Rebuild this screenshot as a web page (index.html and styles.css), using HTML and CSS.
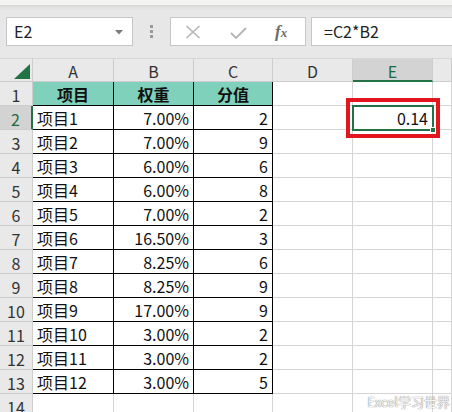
FILE: index.html
```html
<!DOCTYPE html>
<html>
<head>
<meta charset="utf-8">
<link rel="stylesheet" href="styles.css">
</head>
<body>
<div class="app">
  <div class="topstrip"></div>
  <div class="fbar">
    <div class="namebox">
      <span class="nb-text">E2</span>
      <svg class="nb-arrow" width="8" height="5" viewBox="0 0 8 5"><path d="M0 0 H8 L4 4.5 Z" fill="#7a7a7a"/></svg>
    </div>
    <div class="grip"><i></i><i></i><i></i></div>
    <div class="fxbox">
      <svg class="ic-x" width="16" height="14" viewBox="0 0 16 14"><path d="M1.5 1 L14.5 13 M14.5 1 L1.5 13" stroke="#b4b4b4" stroke-width="1.6" fill="none"/></svg>
      <svg class="ic-v" width="17" height="12" viewBox="0 0 17 12"><path d="M1 6 L6 11 L16 1" stroke="#b4b4b4" stroke-width="1.8" fill="none"/></svg>
      <span class="ic-fx">f<span class="x">x</span></span>
    </div>
    <div class="formula">=C2*B2</div>
  </div>
  <div class="grid">
    <div class="h corner"><svg class="tri" width="16" height="15" viewBox="0 0 16 15"><path d="M16 0 V15 H0 Z" fill="#217346"/></svg></div>
    <div class="h col">A</div><div class="h col">B</div><div class="h col">C</div><div class="h col">D</div><div class="h col sel">E</div><div class="h col"></div>

    <div class="h row">1</div><div class="c t th">项目</div><div class="c t th">权重</div><div class="c t th">分值</div><div class="c"></div><div class="c"></div><div class="c"></div>
    <div class="h row rsel">2</div><div class="c t">项目1</div><div class="c t r">7.00%</div><div class="c t r">2</div><div class="c"></div><div class="c r active">0.14<span class="act"><span class="handle"></span></span><span class="redbox"></span></div><div class="c"></div>
    <div class="h row">3</div><div class="c t">项目2</div><div class="c t r">7.00%</div><div class="c t r">9</div><div class="c"></div><div class="c"></div><div class="c"></div>
    <div class="h row">4</div><div class="c t">项目3</div><div class="c t r">6.00%</div><div class="c t r">6</div><div class="c"></div><div class="c"></div><div class="c"></div>
    <div class="h row">5</div><div class="c t">项目4</div><div class="c t r">6.00%</div><div class="c t r">8</div><div class="c"></div><div class="c"></div><div class="c"></div>
    <div class="h row">6</div><div class="c t">项目5</div><div class="c t r">7.00%</div><div class="c t r">2</div><div class="c"></div><div class="c"></div><div class="c"></div>
    <div class="h row">7</div><div class="c t">项目6</div><div class="c t r">16.50%</div><div class="c t r">3</div><div class="c"></div><div class="c"></div><div class="c"></div>
    <div class="h row">8</div><div class="c t">项目7</div><div class="c t r">8.25%</div><div class="c t r">6</div><div class="c"></div><div class="c"></div><div class="c"></div>
    <div class="h row">9</div><div class="c t">项目8</div><div class="c t r">8.25%</div><div class="c t r">9</div><div class="c"></div><div class="c"></div><div class="c"></div>
    <div class="h row">10</div><div class="c t">项目9</div><div class="c t r">17.00%</div><div class="c t r">9</div><div class="c"></div><div class="c"></div><div class="c"></div>
    <div class="h row">11</div><div class="c t">项目10</div><div class="c t r">3.00%</div><div class="c t r">2</div><div class="c"></div><div class="c"></div><div class="c"></div>
    <div class="h row">12</div><div class="c t">项目11</div><div class="c t r">3.00%</div><div class="c t r">2</div><div class="c"></div><div class="c"></div><div class="c"></div>
    <div class="h row">13</div><div class="c t">项目12</div><div class="c t r">3.00%</div><div class="c t r">5</div><div class="c"></div><div class="c"></div><div class="c"></div>
    <div class="h row">14</div><div class="c"></div><div class="c"></div><div class="c"></div><div class="c"></div><div class="c"></div><div class="c"></div>
  </div>
  <div class="watermark">Excel学习世界</div>
</div>
</body>
</html>
```

FILE: styles.css
```css
* { box-sizing: border-box; }
html, body { margin: 0; padding: 0; }
body {
  width: 452px;
  height: 412px;
  overflow: hidden;
  background: #fff;
  font-family: "Noto Sans CJK SC", "Noto Sans", sans-serif;
  color: #111;
}
.app { position: relative; width: 452px; height: 412px; overflow: hidden; }

.topstrip {
  height: 6px;
  background: #f3f3f2;
  border-bottom: 1px solid #d9d9d9;
}
.fbar {
  height: 52px;
  background: linear-gradient(#dedede, #e7e7e7 5px, #e8e8e8);
  display: flex;
  align-items: flex-start;
  padding-top: 11px;
}
.namebox {
  margin-left: 6px;
  width: 127px;
  height: 29px;
  background: #fff;
  border: 1px solid #c6c6c6;
  display: flex;
  align-items: center;
  justify-content: space-between;
  padding: 0 9px 0 7px;
}
.nb-text { font-size: 16px; color: #222; line-height: 27px; }
.nb-arrow { display: block; margin-top: 1px; }
.grip {
  width: 37px;
  height: 29px;
  display: flex;
  flex-direction: column;
  align-items: center;
  justify-content: center;
  gap: 2px;
}
.grip i { display: block; width: 3px; height: 3px; background: #9a9a9a; }
.fxbox {
  width: 136px;
  height: 29px;
  background: #fff;
  border: 1px solid #c6c6c6;
  display: flex;
  align-items: center;
  padding-left: 14px;
}
.ic-x { display: block; }
.ic-v { display: block; margin-left: 29px; margin-top: 3px; }
.ic-fx {
  margin-left: 28px;
  font-family: "Liberation Serif", serif;
  font-style: italic;
  font-weight: bold;
  font-size: 17px;
  color: #6b6b6b;
  line-height: 1;
}
.ic-fx .x { font-size: 13px; }
.formula {
  margin-left: 5px;
  flex: 1;
  height: 29px;
  background: #fff;
  border: 1px solid #c6c6c6;
  border-right: none;
  font-size: 16px;
  line-height: 27px;
  padding-left: 12px;
  color: #222;
}

.grid {
  display: grid;
  grid-template-columns: 33px 81px 80px 79px 80px 80px 19px;
  grid-auto-rows: 24px;
}
.h {
  background: #e9e9e9;
  border-right: 1px solid #cdcdcd;
  border-bottom: 1px solid #cdcdcd;
  font-size: 16px;
  color: #333;
  display: flex;
  align-items: center;
  justify-content: center;
  padding-top: 2px;
}
.corner { position: relative; border-top: 1px solid #d6d6d6; }
.col { border-top: 1px solid #d6d6d6; }
.tri { position: absolute; right: 2px; bottom: 2px; }
.sel {
  background: #d3d3d3;
  color: #1e6b41;
  border-bottom: 2px solid #217346;
}
.rsel {
  background: #d3d3d3;
  color: #1e6b41;
  border-right: 2px solid #217346;
}
.c {
  border-right: 1px solid #d4d4d4;
  border-bottom: 1px solid #d4d4d4;
  font-size: 16px;
  line-height: 23px;
  padding: 1px 4px 0 4px;
  white-space: nowrap;
  color: #111;
}
.c.t { border-right-color: #000; border-bottom-color: #000; }
.c.r { text-align: right; }
.c.th {
  background: #80d1bb;
  font-weight: bold;
  text-align: center;
}
.active { position: relative; }
.act {
  position: absolute;
  left: -1px;
  top: -1px;
  right: -2px;
  bottom: -2px;
  border: 2px solid #217346;
}
.handle {
  position: absolute;
  right: -4px;
  bottom: -4px;
  width: 6px;
  height: 6px;
  background: #217346;
  border: 1px solid #fff;
}
.redbox {
  position: absolute;
  left: -7px;
  top: -8px;
  right: -8px;
  bottom: -9px;
  border: 4px solid #e3161f;
}
.watermark {
  position: absolute;
  right: 2px;
  bottom: 1px;
  font-size: 13px;
  color: #f4f4f4;
  text-shadow: 0 0 1px #8c8c8c, 0 0 1px #8c8c8c;
  letter-spacing: 0;
}
```
